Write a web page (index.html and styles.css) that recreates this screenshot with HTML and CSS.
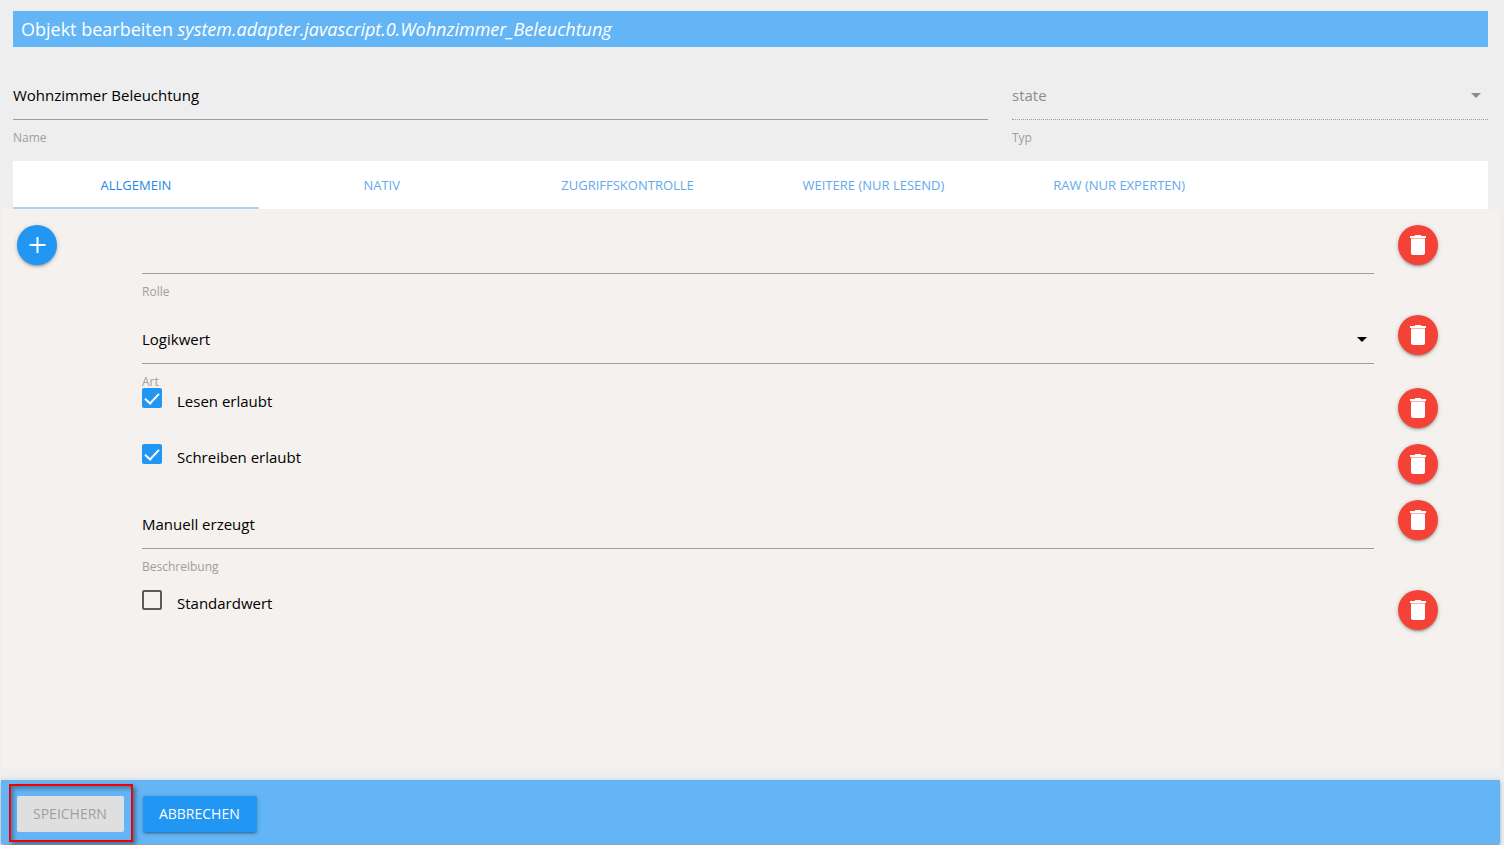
FILE: index.html
```html
<!DOCTYPE html>
<html lang="de">
<head>
<meta charset="utf-8">
<meta name="viewport" content="width=device-width, initial-scale=1">
<title>Objekt bearbeiten</title>
<link rel="stylesheet" href="styles.css">
</head>
<body>
<svg class="sprite" aria-hidden="true">
  <symbol id="icon-delete" viewBox="0 0 24 24"><path d="M5 6h14v14c0 1.100-.9 2-2 2H7c-1.100 0-2-.9-2-2zM20 3v2H4V3h4.500l1-1h5l1 1z"/><path opacity=".6" d="M5 5h14v1H5z"/></symbol>
  <symbol id="icon-add" viewBox="0 0 24 24"><path d="M20.500 13h-7v7h-2v-7h-7v-2h7V4h2v7h7z"/></symbol>
  <symbol id="icon-caret" viewBox="0 0 10 5"><path d="M0 0h10L5 5z"/></symbol>
</svg>
<div class="dialog">
  <header class="head">
    <h1 class="title">Objekt bearbeiten <i>system.adapter.javascript.0.Wohnzimmer_Beleuchtung</i></h1>
    <div class="top-fields">
      <div class="field">
        <input class="control" id="name" type="text" value="Wohnzimmer Beleuchtung">
        <label class="caption" for="name">Name</label>
      </div>
      <div class="field field-disabled">
        <div class="select-wrap">
          <select class="control" id="type" disabled><option>state</option></select>
          <svg class="caret"><use href="#icon-caret"/></svg>
        </div>
        <label class="caption" for="type">Typ</label>
      </div>
    </div>
    <nav class="tabs">
      <a class="tab tab-active" href="#common">Allgemein</a>
      <a class="tab" href="#native">Nativ</a>
      <a class="tab" href="#acl">Zugriffskontrolle</a>
      <a class="tab" href="#more">Weitere (nur lesend)</a>
      <a class="tab" href="#raw">Raw (nur Experten)</a>
    </nav>
  </header>
  <main class="panel" id="common">
    <button class="round add" type="button" aria-label="Hinzufügen"><svg class="icon"><use href="#icon-add"/></svg></button>
    <div class="rows">
      <div class="row row-tall">
        <div class="field">
          <input class="control" id="role" type="text">
          <label class="caption" for="role">Rolle</label>
        </div>
        <button class="round delete" type="button" aria-label="Löschen"><svg class="icon"><use href="#icon-delete"/></svg></button>
      </div>
      <div class="row">
        <div class="field">
          <div class="select-wrap">
            <select class="control" id="kind"><option>Logikwert</option></select>
            <svg class="caret"><use href="#icon-caret"/></svg>
          </div>
          <label class="caption" for="kind">Art</label>
        </div>
        <button class="round delete" type="button" aria-label="Löschen"><svg class="icon"><use href="#icon-delete"/></svg></button>
      </div>
      <div class="row row-check">
        <label class="check"><input class="box" type="checkbox" checked><span>Lesen erlaubt</span></label>
        <button class="round delete" type="button" aria-label="Löschen"><svg class="icon"><use href="#icon-delete"/></svg></button>
      </div>
      <div class="row row-check">
        <label class="check"><input class="box" type="checkbox" checked><span>Schreiben erlaubt</span></label>
        <button class="round delete" type="button" aria-label="Löschen"><svg class="icon"><use href="#icon-delete"/></svg></button>
      </div>
      <div class="row row-tall">
        <div class="field">
          <input class="control" id="desc" type="text" value="Manuell erzeugt">
          <label class="caption" for="desc">Beschreibung</label>
        </div>
        <button class="round delete" type="button" aria-label="Löschen"><svg class="icon"><use href="#icon-delete"/></svg></button>
      </div>
      <div class="row row-check">
        <label class="check"><input class="box" type="checkbox"><span>Standardwert</span></label>
        <button class="round delete" type="button" aria-label="Löschen"><svg class="icon"><use href="#icon-delete"/></svg></button>
      </div>
    </div>
  </main>
  <footer class="foot">
    <div class="marked"><button class="btn" type="button" disabled>Speichern</button></div>
    <button class="btn" type="button">Abbrechen</button>
  </footer>
</div>
</body>
</html>
```
FILE: styles.css
```css
* { box-sizing: border-box; }

body {
  margin: 0;
  background: #eeeeee;
  color: #000;
  font: 15px/20px "Open Sans", "Noto Sans", sans-serif;
}

.sprite { position: absolute; width: 0; height: 0; }

.dialog {
  display: flex;
  flex-direction: column;
  min-height: 100vh;
  padding: 11px 4px 1px 1px;
}

.head { padding: 0 12px; }

.title {
  margin: 0;
  padding: 0 8px;
  background: #64b5f6;
  color: #fff;
  font-size: 18px;
  font-weight: 400;
  line-height: 36px;
}

.top-fields {
  display: grid;
  grid-template-columns: minmax(0, 975fr) minmax(0, 476fr);
  gap: 24px;
  padding: 24px 0 13px;
}

.field { min-width: 0; }

.control {
  display: block;
  width: 100%;
  height: 49px;
  padding: 0;
  border: 0;
  border-bottom: 1px solid #9e9e9e;
  border-radius: 0;
  outline: 0;
  background: transparent;
  color: #000;
  font: inherit;
  appearance: none;
}

.control:disabled { opacity: 1; color: #8c8c8c; border-bottom-style: dotted; }

.caption {
  display: block;
  padding-top: 8px;
  color: #9e9e9e;
  font-size: 12px;
  line-height: 20px;
}

.select-wrap { position: relative; }

.caret {
  position: absolute;
  top: 22px;
  right: 7px;
  width: 10px;
  height: 5px;
  pointer-events: none;
}

.field-disabled .caret { fill: #8c8c8c; }

.tabs {
  display: grid;
  grid-template-columns: repeat(6, 1fr);
  background: #fff;
}

.tab {
  height: 48px;
  color: #64a9ec;
  border-bottom: 2px solid transparent;
  font-size: 13px;
  line-height: 48px;
  text-align: center;
  text-decoration: none;
  text-transform: uppercase;
}

.tab-active { color: #1e88e5; border-bottom-color: #a6d4fa; }

.panel {
  display: flex;
  flex: 1;
  padding: 16px 62px 16px 16px;
  background: #f5f1ee;
}

.rows { flex: 1; min-width: 0; padding-left: 85px; }

.row {
  display: grid;
  grid-template-columns: minmax(0, 1fr) 40px;
  align-items: start;
  gap: 24px;
  height: 73px;
}

.row-tall { height: 90px; }
.row-check { height: 56px; }

.round {
  display: flex;
  flex: none;
  align-items: center;
  justify-content: center;
  width: 40px;
  height: 40px;
  padding: 0;
  border: 0;
  border-radius: 50%;
  box-shadow: 0 2px 2px rgba(0, 0, 0, .14), 0 3px 1px -2px rgba(0, 0, 0, .12), 0 1px 5px rgba(0, 0, 0, .2);
}

.add { background: #2196f3; }
.delete { background: #f44336; }

.icon { width: 24px; height: 24px; fill: #fff; }

.check { display: flex; gap: 15px; }
.check span { padding-top: 3px; }

.box {
  display: grid;
  place-content: start center;
  flex: none;
  width: 20px;
  height: 20px;
  margin: 0;
  border: 2px solid #5a5a5a;
  border-radius: 2px;
  appearance: none;
}

.box:checked { border-color: #2196f3; background: #2196f3; }

.box:checked::after {
  content: "";
  width: 6px;
  height: 12px;
  border: solid #fff;
  border-width: 0 2px 2px 0;
  transform: rotate(43deg);
}

.foot {
  display: flex;
  align-items: baseline;
  gap: 10px;
  height: 64px;
  margin-top: 11px;
  padding: 4px 8px 0;
  background: #64b5f6;
  box-shadow: 0 2px 2px rgba(0, 0, 0, .14), 0 3px 1px -2px rgba(0, 0, 0, .12), 0 1px 5px rgba(0, 0, 0, .2);
}

.marked {
  padding: 10px 7px 8px 6px;
  border: 2px solid #f00000;
  box-shadow: 3px 3px 4px rgba(0, 0, 0, .35), inset 3px 3px 4px rgba(0, 0, 0, .3);
}

.btn {
  display: block;
  height: 36px;
  padding: 0 17px 0 16px;
  border: 0;
  border-radius: 2px;
  background: #2196f3;
  color: #fff;
  font: 14px/36px "Open Sans", "Noto Sans", sans-serif;
  text-transform: uppercase;
  box-shadow: 0 2px 2px rgba(0, 0, 0, .14), 0 3px 1px -2px rgba(0, 0, 0, .12), 0 1px 5px rgba(0, 0, 0, .2);
}

.btn:disabled { background: #dfdfdf; color: #9f9f9f; box-shadow: none; }
```
